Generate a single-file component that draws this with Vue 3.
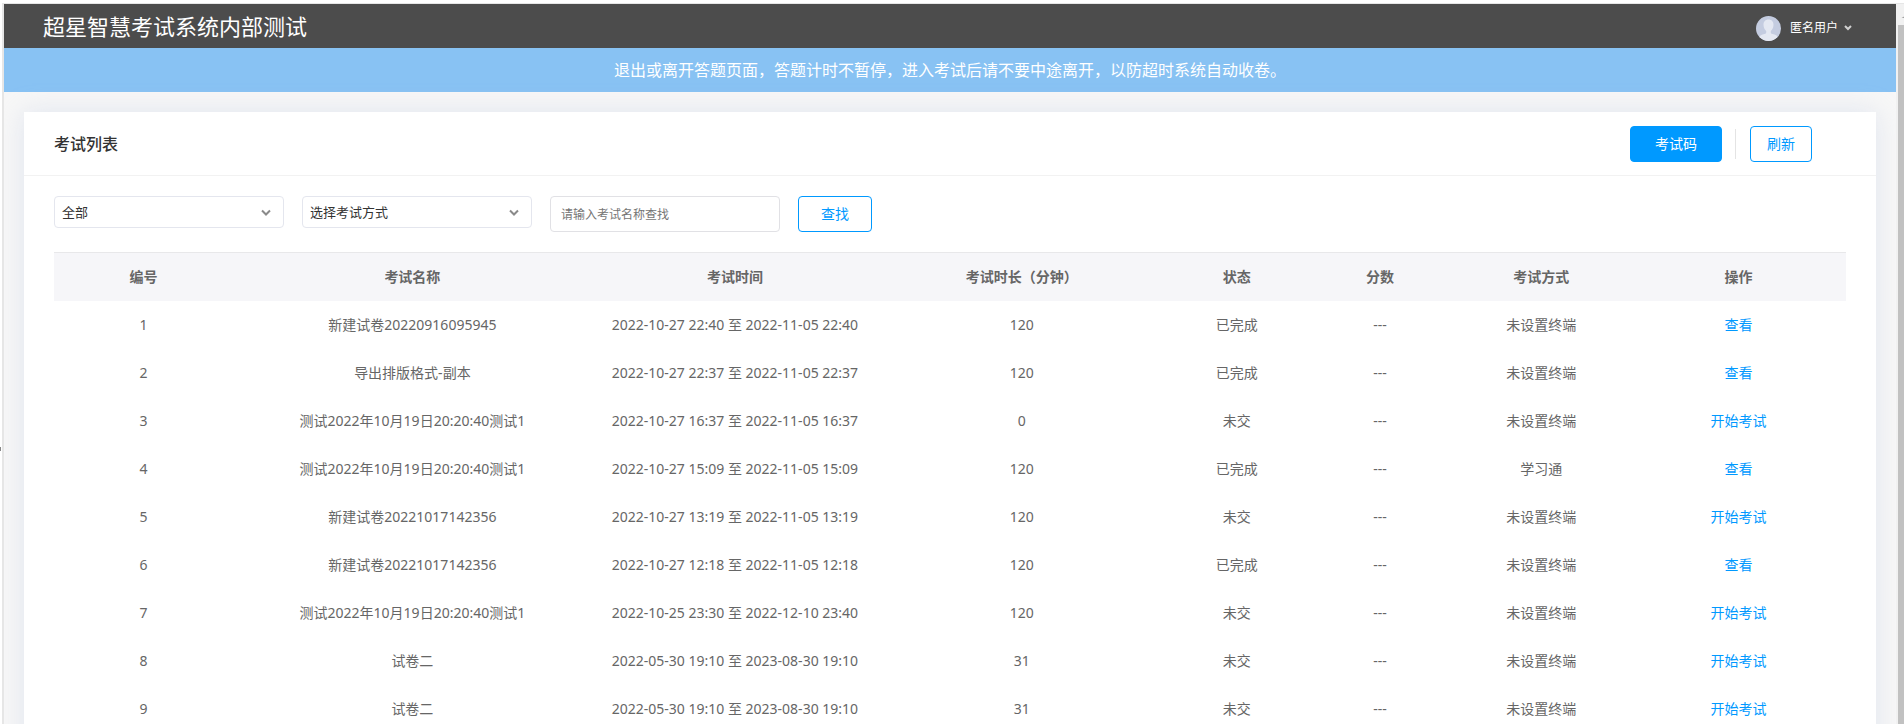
<script setup>
import { ref } from 'vue'

const status = ref('全部')
const mode = ref('选择考试方式')
const keyword = ref('')

const columns = [
  { label: '编号', cls: 'c-10' },
  { label: '考试名称', cls: 'c-20' },
  { label: '考试时间', cls: 'c-16' },
  { label: '考试时长（分钟）', cls: 'c-16' },
  { label: '状态', cls: 'c-8' },
  { label: '分数', cls: 'c-8' },
  { label: '考试方式', cls: 'c-10' },
  { label: '操作', cls: 'c-12' },
]

const exams = [
  ['新建试卷20220916095945', '2022-10-27 22:40 至 2022-11-05 22:40', 120, '已完成', '未设置终端'],
  ['导出排版格式-副本', '2022-10-27 22:37 至 2022-11-05 22:37', 120, '已完成', '未设置终端'],
  ['测试2022年10月19日20:20:40测试1', '2022-10-27 16:37 至 2022-11-05 16:37', 0, '未交', '未设置终端'],
  ['测试2022年10月19日20:20:40测试1', '2022-10-27 15:09 至 2022-11-05 15:09', 120, '已完成', '学习通'],
  ['新建试卷20221017142356', '2022-10-27 13:19 至 2022-11-05 13:19', 120, '未交', '未设置终端'],
  ['新建试卷20221017142356', '2022-10-27 12:18 至 2022-11-05 12:18', 120, '已完成', '未设置终端'],
  ['测试2022年10月19日20:20:40测试1', '2022-10-25 23:30 至 2022-12-10 23:40', 120, '未交', '未设置终端'],
  ['试卷二', '2022-05-30 19:10 至 2023-08-30 19:10', 31, '未交', '未设置终端'],
  ['试卷二', '2022-05-30 19:10 至 2023-08-30 19:10', 31, '未交', '未设置终端'],
]
</script>

<template>
  <div class="frame">
    <div class="gutter"><span class="handle"></span></div>
    <div class="pane">
      <header class="topbar">
        <h1>超星智慧考试系统内部测试</h1>
        <button class="user" type="button">
          <svg class="avatar" viewBox="0 0 25 25" aria-hidden="true">
            <defs>
              <clipPath id="avatar-clip"><circle cx="12.5" cy="12.5" r="12.5" /></clipPath>
            </defs>
            <g clip-path="url(#avatar-clip)">
              <rect width="25" height="25" fill="#c4cce0" />
              <path
                d="M12.5 3.5c-3.2 0-5 2.200-5 5.200 0 2.600 1 4.800 2.700 6.200v1.500c0 .9-.6 1.300-1.700 1.600-3 .8-4.800 1.300-5.500 3.500V25h19v-3.500c-.7-2.200-2.500-2.700-5.500-3.500-1.100-.3-1.700-.7-1.700-1.600v-1.500c1.700-1.400 2.700-3.600 2.700-6.200 0-3-1.800-5.200-5-5.200z"
                fill="#e4e8f2"
              />
            </g>
          </svg>
          <span>匿名用户</span>
          <svg class="caret" viewBox="0 0 8 6" aria-hidden="true">
            <path d="M1 1l3 3 3-3" fill="none" stroke="#d0d0d0" stroke-width="2" />
          </svg>
        </button>
      </header>

      <p class="notice">退出或离开答题页面，答题计时不暂停，进入考试后请不要中途离开，以防超时系统自动收卷。</p>

      <main class="card">
        <div class="card-head">
          <h2>考试列表</h2>
          <div class="actions">
            <button class="btn primary" type="button">考试码</button>
            <span class="divider"></span>
            <button class="btn refresh" type="button">刷新</button>
          </div>
        </div>

        <form class="filters" @submit.prevent>
          <div class="select">
            <select v-model="status" aria-label="状态">
              <option>全部</option>
            </select>
            <svg viewBox="0 0 10 8" aria-hidden="true">
              <path d="M1 1.500l4 4 4-4" fill="none" stroke="#8a8a8a" stroke-width="2" />
            </svg>
          </div>
          <div class="select">
            <select v-model="mode" aria-label="考试方式">
              <option>选择考试方式</option>
            </select>
            <svg viewBox="0 0 10 8" aria-hidden="true">
              <path d="M1 1.500l4 4 4-4" fill="none" stroke="#8a8a8a" stroke-width="2" />
            </svg>
          </div>
          <input v-model="keyword" type="text" placeholder="请输入考试名称查找" aria-label="考试名称" />
          <button class="btn search" type="submit">查找</button>
        </form>

        <table>
          <thead>
            <tr>
              <th v-for="col in columns" :key="col.label" :class="col.cls" scope="col">{{ col.label }}</th>
            </tr>
          </thead>
          <tbody>
            <tr v-for="(exam, i) in exams" :key="i">
              <td>{{ i + 1 }}</td>
              <td>{{ exam[0] }}</td>
              <td>{{ exam[1] }}</td>
              <td>{{ exam[2] }}</td>
              <td>{{ exam[3] }}</td>
              <td>---</td>
              <td>{{ exam[4] }}</td>
              <td><a href="#">{{ exam[3] === '已完成' ? '查看' : '开始考试' }}</a></td>
            </tr>
          </tbody>
        </table>
      </main>
    </div>

    <div class="scrollbar" aria-hidden="true">
      <svg viewBox="0 0 6 4"><path d="M6 0v3H1z" fill="#a0a0a0" /></svg>
      <span class="thumb"></span>
    </div>
  </div>
</template>

<style>
body {
  margin: 0;
  background: #fff;
}
</style>

<style scoped>
.frame {
  box-sizing: border-box;
  display: flex;
  height: 100vh;
  padding-top: 3px;
  overflow: hidden;
  font-family: "Noto Sans", "Noto Sans CJK SC", sans-serif;
  font-size: 14px;
  line-height: 20px;
  color: #666;
}

.frame *,
.frame *::before {
  box-sizing: border-box;
}

button,
input,
select {
  font-family: inherit;
}

h1,
h2,
p {
  margin: 0;
}

.gutter {
  display: flex;
  flex: none;
  align-items: center;
  width: 4px;
  border-right: 2px solid #e6e6e6;
}

.handle {
  width: 1px;
  height: 4px;
  margin-top: 170px;
  background: #888;
}

.pane {
  flex: 1;
  min-width: 0;
  overflow: hidden;
  border-top: 1px solid #e6e6e6;
  background: #f7f7f7;
}

.topbar {
  display: flex;
  align-items: center;
  justify-content: space-between;
  height: 44px;
  padding: 0 44px 0 39px;
  background: #4c4c4c;
  color: #fff;
}

.topbar h1 {
  font-size: 22px;
  font-weight: 400;
  line-height: 44px;
}

.user {
  display: flex;
  align-items: center;
  padding: 4px 0 0;
  border: 0;
  background: none;
  color: #fff;
  font-size: 12px;
  line-height: 20px;
}

.avatar {
  width: 25px;
  height: 25px;
  margin-right: 9px;
}

.caret {
  width: 8px;
  height: 6px;
  margin-left: 6px;
}

.notice {
  background: #88c2f3;
  color: #fff;
  font-size: 16px;
  line-height: 44px;
  text-align: center;
}

.card {
  margin: 20px 20px 0;
  padding-bottom: 40px;
  background: #fff;
  box-shadow: 0 0 24px rgba(190, 202, 228, 0.4);
}

.card-head {
  display: flex;
  align-items: center;
  justify-content: space-between;
  height: 64px;
  padding: 0 64px 0 30px;
  border-bottom: 1px solid #f2f2f2;
}

.card-head h2 {
  color: #333;
  font-size: 16px;
  font-weight: 500;
  line-height: 24px;
}

.actions {
  display: flex;
  align-items: center;
}

.divider {
  width: 1px;
  height: 30px;
  margin: 0 14px 0 13px;
  background: #e4e4e4;
}

.btn {
  height: 36px;
  padding: 0;
  border: 1px solid #0099ff;
  border-radius: 4px;
  background: #fff;
  color: #0099ff;
  font-size: 14px;
  line-height: 20px;
}

.primary {
  width: 92px;
  background: #0099ff;
  color: #fff;
}

.refresh {
  width: 62px;
}

.search {
  width: 74px;
}

.filters {
  display: flex;
  align-items: flex-start;
  gap: 18px;
  padding: 20px 30px;
}

.select {
  position: relative;
  width: 230px;
}

.select select {
  width: 100%;
  height: 32px;
  padding: 0 32px 0 7px;
  appearance: none;
  border: 1px solid #e4e6ee;
  border-radius: 4px;
  background: #fff;
  color: #333;
  font-size: 13px;
}

.select svg {
  position: absolute;
  top: 13px;
  right: 13px;
  width: 10px;
  height: 8px;
  pointer-events: none;
}

.filters input {
  width: 230px;
  height: 36px;
  padding: 0 10px;
  border: 1px solid #e1e1e5;
  border-radius: 4px;
  color: #333;
  font-size: 12px;
}

.filters input::placeholder {
  color: #757575;
  opacity: 1;
}

table {
  width: calc(100% - 60px);
  margin: 0 30px;
  table-layout: fixed;
  border-spacing: 0;
}

th,
td {
  padding: 0;
  text-align: center;
  white-space: nowrap;
}

th {
  height: 49px;
  border-top: 1px solid #e8e8ea;
  background: #f6f6f9;
  font-weight: 600;
}

td {
  height: 48px;
}

.c-8 {
  width: 8%;
}

.c-10 {
  width: 10%;
}

.c-12 {
  width: 12%;
}

.c-16 {
  width: 16%;
}

.c-20 {
  width: 20%;
}

a {
  color: #0099ff;
  text-decoration: none;
}

.scrollbar {
  display: flex;
  flex: none;
  flex-direction: column;
  align-items: flex-end;
  width: 8px;
  padding-top: 12px;
  border-top: 1px solid #e6e6e6;
  background: #f1f1f1;
}

.scrollbar svg {
  width: 3px;
  height: 3px;
}

.thumb {
  flex: 1;
  width: 6px;
  margin-top: 6px;
  background: #c1c1c1;
}
</style>
